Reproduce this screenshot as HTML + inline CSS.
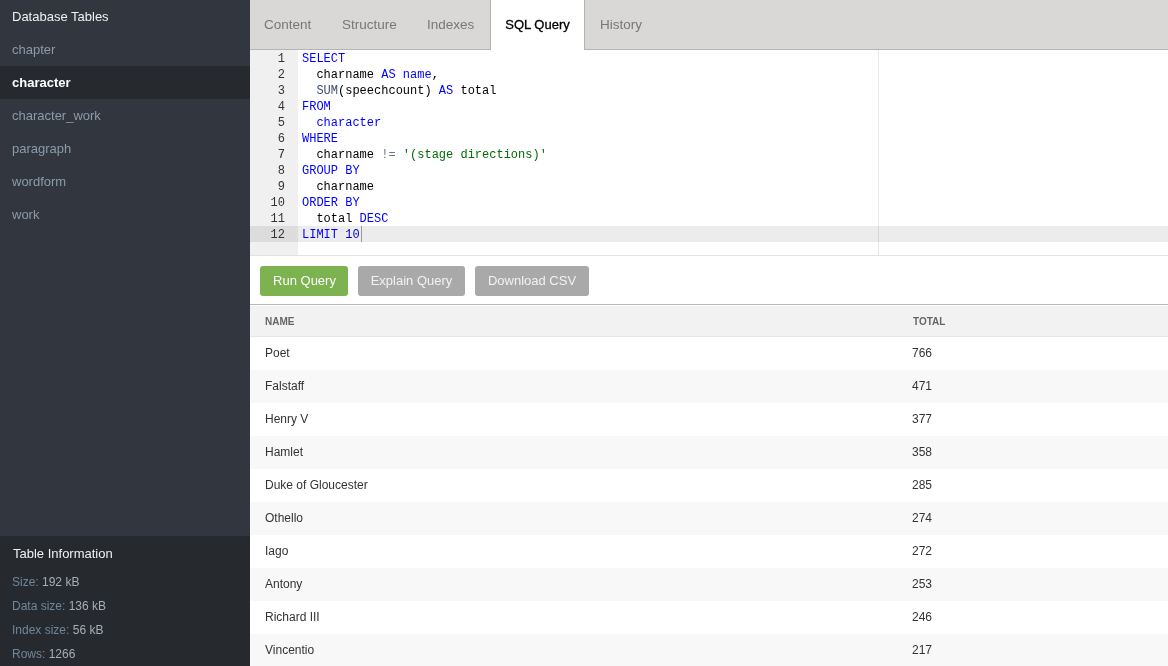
<!DOCTYPE html>
<html><head><meta charset="utf-8">
<style>
*{margin:0;padding:0;box-sizing:border-box}
html,body{width:1168px;height:666px;overflow:hidden;background:#fff;font-family:"Liberation Sans",sans-serif}
.abs{position:absolute;white-space:nowrap}
#sidebar{position:absolute;left:0;top:0;width:250px;height:666px;background:#32363f}
#sidebar .title{position:absolute;left:12px;top:0;height:33px;line-height:33px;font-size:13px;color:#f0f0f0}
#sidebar .item{position:absolute;left:0;width:250px;height:33px;line-height:33px;padding-left:12px;font-size:13px;color:#8a9cab}
#sidebar .item.active{background:#262a2e;color:#fff;font-weight:bold}
#info{position:absolute;left:0;top:536px;width:250px;height:130px;background:#262a2e}
#info .t{position:absolute;left:13px;font-size:13px;color:#f0f0f0}
#info .r{position:absolute;left:12px;font-size:12px;color:#a4aeb6}
#info .r b{font-weight:normal;color:#6f879b}
#tabs{position:absolute;left:250px;top:0;width:918px;height:50px;background:#d9d8d6;border-bottom:1px solid #b4b4b4}
.tab{position:absolute;top:0;height:49px;line-height:49px;font-size:13.5px;color:#777}
.tab.active{font-size:13px;background:#fff;color:#000;-webkit-text-stroke:0.3px #000;border-left:1px solid #b4b4b4;border-right:1px solid #b4b4b4;height:50px}
#editor{position:absolute;left:250px;top:50px;width:918px;height:205px;background:#fff;font-family:"Liberation Mono",monospace;font-size:12px}
#gutter{position:absolute;left:0;top:0;width:48px;height:205px;background:#f0f0f0}
.ln{position:absolute;left:0;width:35px;height:16px;line-height:16px;padding-top:1px;line-height:16px;text-align:right;color:#333}
.cl{position:absolute;left:52px;height:17px;padding-top:1px;line-height:16px;color:#000;white-space:pre}
.activeline{position:absolute;left:48px;top:176px;width:870px;height:16px;background:rgba(0,0,0,0.075)}
.gactive{position:absolute;left:0;top:176px;width:48px;height:16px;background:#dcdcdc}
.margin{position:absolute;left:628px;top:0;width:1px;height:205px;background:#e8e8e8}
.kw{color:#0000ff}.fn{color:#3c4c72}.str{color:#036a07}.op{color:#687687}.num{color:#0000cd}
.cursor{position:absolute;left:360px;top:176px;width:1px;height:16px;background:#999}
#editborder{position:absolute;left:250px;top:255px;width:918px;height:1px;background:#e3e3e3}
.btn{position:absolute;top:266px;height:30px;line-height:30px;border-radius:3px;font-size:13px;color:#fff;text-align:center}
.green{background:#7cb350}
.gray{background:#a9a9a9;color:#f2f2f2}
#sep{position:absolute;left:250px;top:304px;width:918px;height:1px;background:#b9b9b9}
#thead{position:absolute;left:250px;top:306px;width:918px;height:31px;background:#f2f2f2;border-bottom:1px solid #e6e6e6}
.th{position:absolute;top:1px;height:30px;line-height:30px;font-size:10px;font-weight:bold;color:#666}
.row{position:absolute;left:250px;width:918px;height:33px;line-height:33px;font-size:12px;color:#333}
.row.odd{background:#f8f8f8}
.row span{position:absolute}
</style></head><body><div id="wrap" style="will-change:transform;position:absolute;left:0;top:0;width:1168px;height:666px;overflow:hidden">
<div id="sidebar">
  <div class="title">Database Tables</div>
  <div class="item" style="top:33px">chapter</div>
  <div class="item active" style="top:66px">character</div>
  <div class="item" style="top:99px">character_work</div>
  <div class="item" style="top:132px">paragraph</div>
  <div class="item" style="top:165px">wordform</div>
  <div class="item" style="top:198px">work</div>
</div>
<div id="info">
  <div class="t" style="top:9px;line-height:18px">Table Information</div>
  <div class="r" style="top:38px;line-height:16px"><b>Size:</b> 192 kB</div>
  <div class="r" style="top:62px;line-height:16px"><b>Data size:</b> 136 kB</div>
  <div class="r" style="top:86px;line-height:16px"><b>Index size:</b> 56 kB</div>
  <div class="r" style="top:110px;line-height:16px"><b>Rows:</b> 1266</div>
</div>
<div id="tabs">
  <div class="tab" style="left:14px">Content</div>
  <div class="tab" style="left:92px">Structure</div>
  <div class="tab" style="left:177px">Indexes</div>
  <div class="tab active" style="left:240px;width:95px;text-align:center">SQL Query</div>
  <div class="tab" style="left:350px">History</div>
</div>
<div id="editor">
  <div id="gutter"></div>
  <div class="gactive"></div>
  <div class="margin"></div>
  <div class="activeline"></div>
  <div class="ln" style="top:0">1</div>
  <div class="ln" style="top:16px">2</div>
  <div class="ln" style="top:32px">3</div>
  <div class="ln" style="top:48px">4</div>
  <div class="ln" style="top:64px">5</div>
  <div class="ln" style="top:80px">6</div>
  <div class="ln" style="top:96px">7</div>
  <div class="ln" style="top:112px">8</div>
  <div class="ln" style="top:128px">9</div>
  <div class="ln" style="top:144px">10</div>
  <div class="ln" style="top:160px">11</div>
  <div class="ln" style="top:176px">12</div>
  <div class="cl" style="top:0"><span class="kw">SELECT</span></div>
  <div class="cl" style="top:16px">  charname <span class="kw">AS</span> <span class="kw">name</span>,</div>
  <div class="cl" style="top:32px">  <span class="fn">SUM</span>(speechcount) <span class="kw">AS</span> total</div>
  <div class="cl" style="top:48px"><span class="kw">FROM</span></div>
  <div class="cl" style="top:64px">  <span class="kw">character</span></div>
  <div class="cl" style="top:80px"><span class="kw">WHERE</span></div>
  <div class="cl" style="top:96px">  charname <span class="op">!=</span> <span class="str">'(stage directions)'</span></div>
  <div class="cl" style="top:112px"><span class="kw">GROUP BY</span></div>
  <div class="cl" style="top:128px">  charname</div>
  <div class="cl" style="top:144px"><span class="kw">ORDER BY</span></div>
  <div class="cl" style="top:160px">  total <span class="kw">DESC</span></div>
  <div class="cl" style="top:176px"><span class="kw">LIMIT</span> <span class="num">10</span></div>
  <div class="cursor" style="left:111px"></div>
</div>
<div id="editborder"></div>
<div class="btn green" style="left:260px;width:88px;padding-left:1px">Run Query</div>
<div class="btn gray" style="left:358px;width:107px">Explain Query</div>
<div class="btn gray" style="left:475px;width:114px">Download CSV</div>
<div id="sep"></div>
<div id="thead">
  <div class="th" style="left:15px">NAME</div>
  <div class="th" style="left:663px">TOTAL</div>
</div>
<div class="row" style="top:337px"><span style="left:15px">Poet</span><span style="left:662px">766</span></div>
<div class="row odd" style="top:370px"><span style="left:15px">Falstaff</span><span style="left:662px">471</span></div>
<div class="row" style="top:403px"><span style="left:15px">Henry V</span><span style="left:662px">377</span></div>
<div class="row odd" style="top:436px"><span style="left:15px">Hamlet</span><span style="left:662px">358</span></div>
<div class="row" style="top:469px"><span style="left:15px">Duke of Gloucester</span><span style="left:662px">285</span></div>
<div class="row odd" style="top:502px"><span style="left:15px">Othello</span><span style="left:662px">274</span></div>
<div class="row" style="top:535px"><span style="left:15px">Iago</span><span style="left:662px">272</span></div>
<div class="row odd" style="top:568px"><span style="left:15px">Antony</span><span style="left:662px">253</span></div>
<div class="row" style="top:601px"><span style="left:15px">Richard III</span><span style="left:662px">246</span></div>
<div class="row odd" style="top:634px"><span style="left:15px">Vincentio</span><span style="left:662px">217</span></div>
</div></body></html>
